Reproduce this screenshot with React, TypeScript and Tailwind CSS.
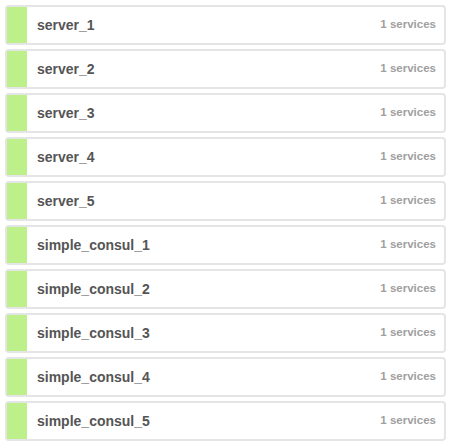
import React from "react";

const nodes = [
  "server_1",
  "server_2",
  "server_3",
  "server_4",
  "server_5",
  "simple_consul_1",
  "simple_consul_2",
  "simple_consul_3",
  "simple_consul_4",
  "simple_consul_5",
];

const App = () => {
  return (
    <div
      className="w-[451px] h-[446px] bg-white p-[5px] flex flex-col gap-[4px]"
      style={{ fontFamily: '"Liberation Sans", Arial, sans-serif' }}
    >
      {nodes.map((name) => (
        <div
          key={name}
          className="h-[40px] flex items-stretch border-2 border-[#e5e5e5] rounded-[4px] bg-white"
        >
          <div className="w-[20px] bg-[#bdf08a]" />
          <div className="flex-1 flex items-center justify-between pl-[10px] pr-[8px]">
            <span className="text-[14px] font-bold text-[#555555]">{name}</span>
            <span className="text-[11.5px] font-bold text-[#a0a0a0]">1 services</span>
          </div>
        </div>
      ))}
    </div>
  );
};

export default App;
